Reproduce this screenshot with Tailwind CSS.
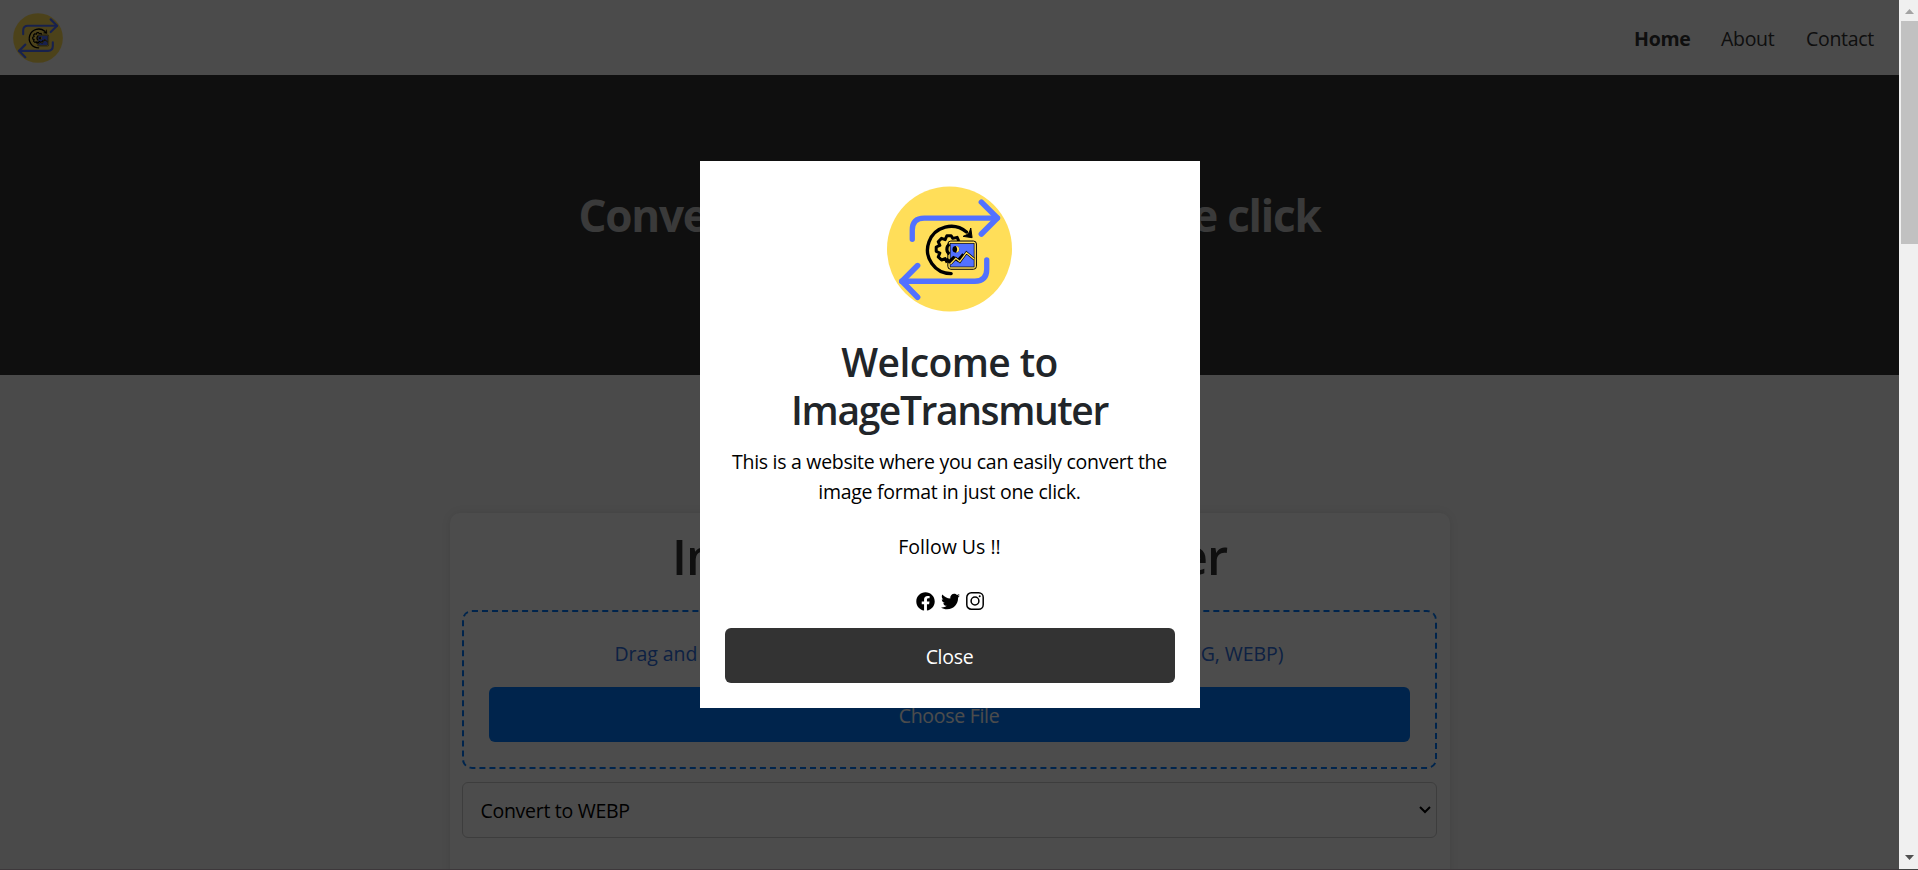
<!DOCTYPE html>
<html lang="en">
<head>
<meta charset="utf-8">
<title>ImageTransmuter</title>
<script src="https://cdn.jsdelivr.net/npm/@tailwindcss/browser@4"></script>
</head>
<body class="relative flex h-[870px] w-[1918px] overflow-hidden bg-[#f8f8f8] font-['Open_Sans','Noto_Sans',sans-serif] text-[19.5px] leading-[30px] tracking-[-0.29px] text-black">
<svg class="hidden">
  <symbol id="logo" viewBox="52 47 376 378">
    <circle cx="240" cy="236" r="188" fill="#ffde59"/>
    <g fill="none" stroke="#5271ff" stroke-width="16" stroke-linecap="round" stroke-linejoin="round">
      <path d="M128 207v-28q0-36 36-36h220"/><path stroke-width="17" d="M336 95l48 48-48 48"/>
      <path d="M352 269v28q0 36-36 36H96"/><path stroke-width="17" d="M144 286l-47 47 47 48"/>
    </g>
    <path d="M245 310a71 71 0 1 1 46-125" fill="none" stroke="#000" stroke-width="10" stroke-linecap="round"/>
    <path d="M304 173l4 29-27-4 11-5 8-8z" fill="#000" stroke="#000" stroke-width="3"/>
    <path d="M268 212l-5-11-13 3-5-8h-13l-5 12-11-4-10 10 5 11-11 5v13l11 5-5 12 10 9 11-4 6 12" fill="none" stroke="#000" stroke-width="9" stroke-linejoin="round"/>
    <rect x="235" y="212" width="86" height="85" rx="9" fill="#ffde59" stroke="#000" stroke-width="3"/>
    <rect x="242" y="219" width="72" height="71" fill="#5271ff" stroke="#000" stroke-width="2"/>
    <path d="M240 222a17 17 0 0 0 0 29M231 265l8 9 13-12 14 8 16-18" fill="none" stroke="#000" stroke-width="9"/>
    <path d="M243 281l16-17 12 10 20-27 24 20" fill="none" stroke="#000" stroke-width="8"/>
    <path d="M243 281l16-17 12 10 20-27 24 20" fill="none" stroke="#ffde59" stroke-width="4"/>
    <circle cx="259" cy="237" r="10" fill="#000"/><path d="M259 227a10 10 0 0 1 0 20q8-10 0-20" fill="#ffde59"/>
  </symbol>
</svg>

<div class="relative h-[870px] w-[1899px] shrink-0 overflow-hidden">
  <header class="flex h-[75px] items-center justify-between bg-[#fafafa] pl-[13px] pr-[25px]">
    <svg class="size-[50px]"><use href="#logo"/></svg>
    <nav class="flex gap-[31px] pt-[2px] text-[#333]">
      <a class="w-[56px] whitespace-nowrap font-bold">Home</a>
      <a class="w-[54px] whitespace-nowrap">About</a>
      <a class="w-[68px] whitespace-nowrap">Contact</a>
    </nav>
  </header>
  <section class="flex h-[300px] items-center justify-center bg-[#333] pb-[20px]">
    <h1 class="whitespace-nowrap text-[44px] font-bold leading-[60px] tracking-[-1.2px] text-[#c4c4c4]">Convert your image in just one click</h1>
  </section>
  <main class="mx-auto mt-[138px] flex h-[500px] w-[1000px] flex-col rounded-[10px] bg-[#fefefe] px-3 pt-[10px] shadow-[0_0_12px_rgba(0,0,0,0.1)]">
    <h2 class="whitespace-nowrap text-center text-[49px] font-semibold leading-[66px] tracking-[-1.1px] text-[#333]">Image Format Converter</h2>
    <div class="mt-[21px] flex h-[159px] w-[975px] flex-col rounded-[10px] border-2 border-dashed border-[#007bff] px-[25px] pt-[27px]">
      <p class="whitespace-nowrap text-center tracking-[-0.06px] text-[#2f6fe0]">Drag and drop your images here or click to browse (PNG, JPG, JPEG, WEBP)</p>
      <button class="mt-[18px] h-[55px] shrink-0 rounded-[6px] bg-[#007bff] pt-[2px] text-white">Choose File</button>
    </div>
    <div class="mt-[13px] flex h-[56px] w-[975px] items-center justify-between rounded-[6px] border border-[#ccc] pl-[18px] pr-[5px]">
      <span class="pt-[2px]">Convert to WEBP</span>
      <svg class="h-[8px] w-[12px]" viewBox="0 0 12 8"><path d="M1 1l5 5 5-5" fill="none" stroke="#000" stroke-width="2"/></svg>
    </div>
  </main>
  <div class="absolute inset-0 flex items-start justify-center bg-black/70 pt-[161px]">
    <div class="flex h-[547px] w-[500px] flex-col items-center bg-white p-[25px] text-center">
      <svg class="h-[126px] w-[125px] shrink-0"><use href="#logo"/></svg>
      <h2 class="mt-[26px] flex flex-col whitespace-nowrap text-[39px] font-semibold leading-[48px] text-[#212529]"><span class="tracking-[-0.6px]">Welcome to</span><span class="tracking-[-1.4px]">ImageTransmuter</span></h2>
      <p class="mt-[13px] whitespace-nowrap">This is a website where you can easily convert the<br>image format in just one click.</p>
      <p class="mt-[25px] tracking-normal">Follow Us !!</p>
      <div class="mt-[29px] flex h-5 shrink-0 items-center gap-[6px]">
        <svg class="size-[19px]" viewBox="0 0 512 512"><path d="M504 256C504 119 393 8 256 8S8 119 8 256c0 123.8 90.700 226.400 209.300 245V327.700h-63V256h63v-54.600c0-62.200 37-96.500 93.700-96.500 27.100 0 55.500 4.800 55.500 4.800v61h-31.300c-30.800 0-40.400 19.100-40.400 38.700V256h68.800l-11 71.700h-57.800V501C413.300 482.400 504 379.800 504 256z"/></svg>
        <svg class="size-[19px]" viewBox="0 0 512 512"><path d="M459.400 151.700c.3 4.500.3 9.100.3 13.600 0 138.700-105.600 298.600-298.600 298.600-59.500 0-114.700-17.200-161.100-47.100 8.400 1 16.600 1.300 25.300 1.300 49.100 0 94.200-16.600 130.300-44.800-46.100-1-84.800-31.200-98.100-72.800 6.500 1 13 1.600 19.800 1.600 9.400 0 18.800-1.300 27.600-3.600-48.100-9.700-84.100-52-84.100-103v-1.300c14 7.800 30.200 12.700 47.400 13.300-28.300-18.800-46.800-51-46.800-87.400 0-19.500 5.200-37.400 14.300-53 51.700 63.700 129.300 105.300 216.400 109.800-1.600-7.800-2.600-15.900-2.600-24 0-57.800 46.800-104.900 104.900-104.900 30.200 0 57.500 12.700 76.700 33.100 23.700-4.500 46.500-13.300 66.600-25.300-7.800 24.400-24.400 44.800-46.100 57.800 21.100-2.300 41.600-8.100 60.400-16.200-14.300 20.800-32.200 39.300-52.600 54.300z"/></svg>
        <svg class="size-[18px]" viewBox="0 0 18 18" fill="none" stroke="#000" stroke-width="1.500"><rect x=".8" y=".8" width="16.400" height="16.400" rx="4.500"/><circle cx="9" cy="9" r="3.900"/><circle cx="13.700" cy="4.300" r="1" fill="#000" stroke="none"/></svg>
      </div>
      <button class="mt-[17px] h-[55px] w-[450px] shrink-0 rounded-[6px] bg-[#333] pt-[2px] text-white">Close</button>
    </div>
  </div>
  <div class="absolute inset-x-0 bottom-0 h-px bg-[#3d383b]"></div>
</div>

<aside class="flex h-[870px] w-[19px] flex-col justify-between border-b border-b-[#444] bg-[#f0f0f0] pl-[2px]">
  <div>
    <svg class="block h-[21px] w-[17px]" viewBox="0 0 17 21"><path d="M4 14h9L8.500 9z" fill="#a3a3a3"/></svg>
    <div class="h-[223px] bg-[#c1c1c1]"></div>
  </div>
  <svg class="h-[21px] w-[17px]" viewBox="0 0 17 21"><path d="M4 7h9l-4.500 5z" fill="#505050"/></svg>
</aside>
</body>
</html>
